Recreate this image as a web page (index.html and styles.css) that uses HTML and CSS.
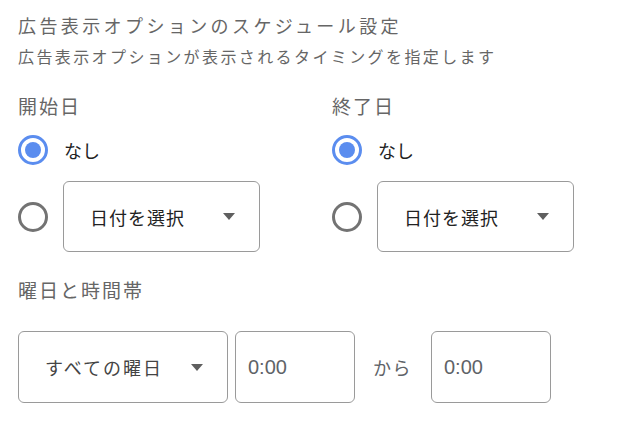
FILE: index.html
```html
<!DOCTYPE html>
<html lang="ja">
<head>
<meta charset="utf-8">
<link rel="stylesheet" href="styles.css">
</head>
<body>
<div class="page">
  <div class="title">広告表示オプションのスケジュール設定</div>
  <div class="subtitle">広告表示オプションが表示されるタイミングを指定します</div>

  <div class="columns">
    <div class="col">
      <div class="label">開始日</div>
      <div class="row row-none">
        <span class="radio checked"></span>
        <span class="none">なし</span>
      </div>
      <div class="row row-date">
        <span class="radio"></span>
        <div class="select date">
          <span class="select-text">日付を選択</span>
          <span class="caret"></span>
        </div>
      </div>
    </div>
    <div class="col">
      <div class="label">終了日</div>
      <div class="row row-none">
        <span class="radio checked"></span>
        <span class="none">なし</span>
      </div>
      <div class="row row-date">
        <span class="radio"></span>
        <div class="select date">
          <span class="select-text">日付を選択</span>
          <span class="caret"></span>
        </div>
      </div>
    </div>
  </div>

  <div class="label label-week">曜日と時間帯</div>
  <div class="time-row">
    <div class="select week">
      <span class="select-text week-text">すべての曜日</span>
      <span class="caret"></span>
    </div>
    <div class="time">0:00</div>
    <span class="from">から</span>
    <div class="time">0:00</div>
  </div>
</div>
</body>
</html>
```

FILE: styles.css
```css
* { box-sizing: border-box; }
html, body { margin: 0; padding: 0; background: #fff; }
body {
  font-family: "Liberation Sans", "Noto Sans CJK JP", sans-serif;
  color: #202124;
}
.page {
  padding: 13px 0 0 18px;
}
.title {
  font-size: 18px;
  line-height: 28px;
  letter-spacing: 3.4px;
  color: #666;
}
.subtitle {
  margin-top: 3px;
  font-size: 16px;
  line-height: 28px;
  letter-spacing: 2.4px;
  color: #666;
}
.columns {
  display: flex;
  margin-top: 22px;
}
.col {
  flex: none;
  width: 314px;
}
.label {
  font-size: 19px;
  line-height: 28px;
  letter-spacing: 2px;
  color: #666;
}
.row {
  display: flex;
  align-items: center;
  gap: 15px;
}
.row-none {
  margin-top: 13px;
  height: 30px;
}
.row-date {
  margin-top: 16px;
}
.radio {
  width: 30px;
  height: 30px;
  border-radius: 50%;
  border: 3px solid #737373;
  flex: none;
  display: flex;
  align-items: center;
  justify-content: center;
}
.radio.checked {
  border-color: #5b8def;
}
.radio.checked::after {
  content: "";
  width: 16px;
  height: 16px;
  border-radius: 50%;
  background: #5b8def;
}
.none {
  font-size: 18px;
  color: #222;
  margin-left: 1px;
}
.select {
  display: flex;
  align-items: center;
  justify-content: space-between;
  border: 1px solid #9a9a9a;
  border-radius: 6px;
  padding: 0 24px 0 26px;
}
.select.date {
  width: 197px;
  height: 71px;
}
.select-text {
  font-size: 18px;
  letter-spacing: 1px;
  color: #222;
}
.caret {
  width: 0;
  height: 0;
  border-left: 6.5px solid transparent;
  border-right: 6.5px solid transparent;
  border-top: 7px solid #5f5f5f;
}
.label-week {
  margin-top: 26px;
}
.time-row {
  display: flex;
  align-items: center;
  margin-top: 25px;
}
.select.week {
  width: 210px;
  height: 72px;
}
.week-text {
  letter-spacing: 2px;
  color: #444;
}
.time {
  width: 120px;
  height: 72px;
  border: 1px solid #9a9a9a;
  border-radius: 6px;
  margin-left: 7px;
  padding-left: 12px;
  display: flex;
  align-items: center;
  font-size: 20px;
  color: #5f6368;
}
.from {
  margin: 0 19px 0 18px;
  font-size: 18px;
  letter-spacing: 1.5px;
  color: #5f6368;
}
.from + .time {
  margin-left: 0;
}
```
